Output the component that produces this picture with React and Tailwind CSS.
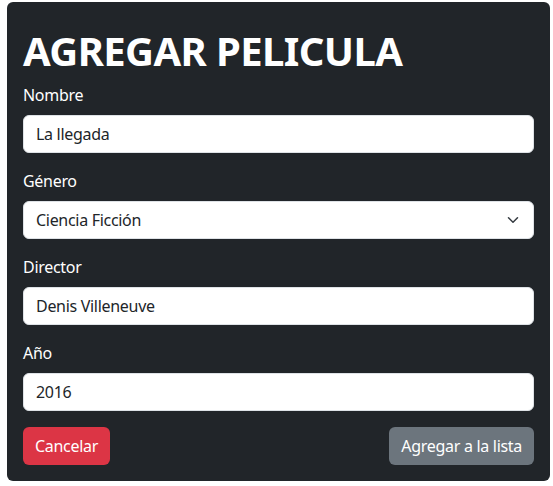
export default function App() {
  const font = { fontFamily: '"Noto Sans", "Open Sans", sans-serif' };
  return (
    <div className="min-h-[486px] w-[553px] bg-white pl-[7px] pt-[2px]" style={font}>
      <div className="w-[543px] rounded-[6px] bg-[#212529] px-[16px] pt-[25px] pb-[16px] text-white">
        <h1 className="mb-[8px] text-[40px] font-bold leading-[48px] tracking-[-0.6px]">AGREGAR PELICULA</h1>
        <div className="flex flex-col gap-[16px] tracking-[-0.3px]">
          <Field label="Nombre" value="La llegada" />
          <div>
            <label className="mb-[8px] block text-[16px] leading-[24px]">Género</label>
            <div className="flex h-[38px] items-center justify-between rounded-[6px] border border-[#dee2e6] bg-white pl-[12px] pr-[14px] text-[16px] leading-[24px] text-[#212529]">
              <span>Ciencia Ficción</span>
              <svg width="12" height="12" viewBox="0 0 16 16" fill="none" stroke="#343a40" strokeWidth="2" strokeLinecap="round" strokeLinejoin="round">
                <path d="m2 5 6 6 6-6" />
              </svg>
            </div>
          </div>
          <Field label="Director" value="Denis Villeneuve" />
          <Field label="Año" value="2016" />
          <div className="flex items-center justify-between">
            <button className="h-[38px] rounded-[6px] bg-[#dc3545] px-[12px] text-[16px] leading-[24px] text-white">Cancelar</button>
            <button className="h-[38px] rounded-[6px] bg-[#6c757d] px-[12px] text-[16px] leading-[24px] text-white">Agregar a la lista</button>
          </div>
        </div>
      </div>
    </div>
  );
}

function Field({ label, value }) {
  return (
    <div>
      <label className="mb-[8px] block text-[16px] leading-[24px]">{label}</label>
      <div className="flex h-[38px] items-center rounded-[6px] border border-[#dee2e6] bg-white px-[12px] text-[16px] leading-[24px] text-[#212529]">
        {value}
      </div>
    </div>
  );
}
